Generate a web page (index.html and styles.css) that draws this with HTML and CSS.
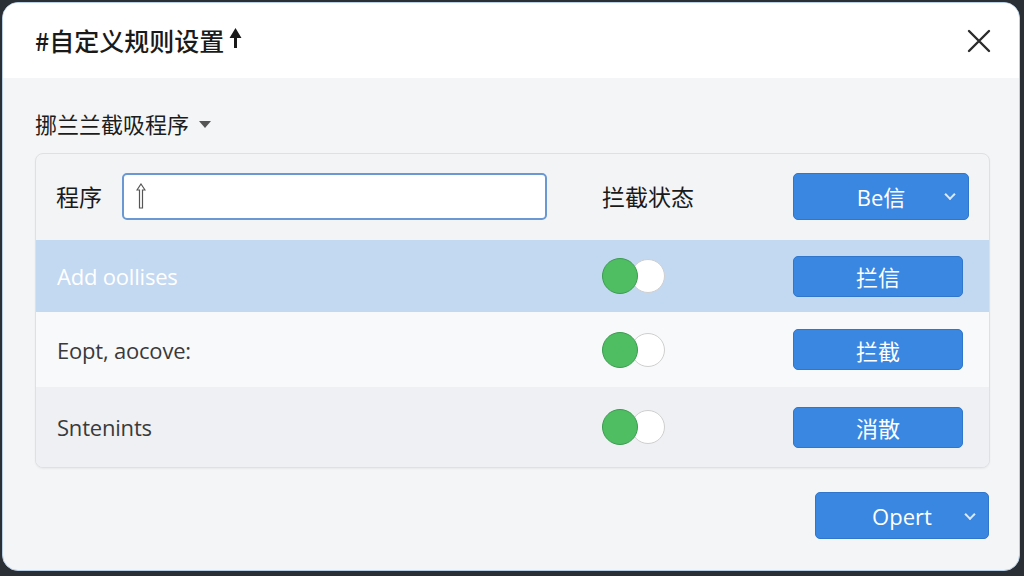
FILE: index.html
```html
<!DOCTYPE html>
<html lang="zh-CN">
<head>
    <meta charset="UTF-8">
    <meta name="viewport" content="width=device-width, initial-scale=1.0">
    <title>自定义规则设置</title>
    <link rel="stylesheet" href="styles.css">
</head>
<body>
    <div class="dialogo">
        <div class="cabecalho">
            <h1 class="titulo">#自定义规则设置
                <svg class="seta" width="13" height="22" viewBox="0 0 13 22">
                    <path d="M6.5 1 L12.5 11 L8 11 L8 21 L5 21 L5 11 L0.5 11 Z" fill="#1a1a1a"/>
                </svg>
            </h1>
            <button class="fechar" aria-label="关闭">
                <svg width="24" height="24" viewBox="0 0 24 24">
                    <path d="M2 2 L22 22 M22 2 L2 22" stroke="#2b2b2b" stroke-width="2.4" fill="none" stroke-linecap="round"/>
                </svg>
            </button>
        </div>

        <div class="corpo">
            <div class="secao">挪兰兰截吸程序 <span class="triangulo"></span></div>

            <div class="cartao">
                <div class="linha linha-topo">
                    <div class="celula-nome">
                        <span class="rotulo">程序</span>
                        <div class="campo">
                            <svg width="10" height="26" viewBox="0 0 10 26">
                                <path d="M5 1 L9 7 L6.5 7 L6.5 25 L3.5 25 L3.5 7 L1 7 Z" fill="none" stroke="#555" stroke-width="1.2"/>
                            </svg>
                        </div>
                    </div>
                    <div class="celula-estado rotulo">拦截状态</div>
                    <div class="celula-botao">
                        <button class="botao botao-menu">Be信 <span class="chevron"></span></button>
                    </div>
                </div>

                <div class="linha linha-ativa">
                    <div class="celula-nome nome claro">Add oollises</div>
                    <div class="celula-estado">
                        <span class="toggle"><span class="bola-on"></span><span class="bola-off"></span></span>
                    </div>
                    <div class="celula-botao"><button class="botao">拦信</button></div>
                </div>

                <div class="linha linha-clara">
                    <div class="celula-nome nome">Eopt, aocove:</div>
                    <div class="celula-estado">
                        <span class="toggle"><span class="bola-on"></span><span class="bola-off"></span></span>
                    </div>
                    <div class="celula-botao"><button class="botao">拦截</button></div>
                </div>

                <div class="linha linha-cinza">
                    <div class="celula-nome nome">Sntenints</div>
                    <div class="celula-estado">
                        <span class="toggle"><span class="bola-on"></span><span class="bola-off"></span></span>
                    </div>
                    <div class="celula-botao"><button class="botao">消散</button></div>
                </div>
            </div>

            <div class="rodape">
                <button class="botao botao-menu botao-rodape">Opert <span class="chevron"></span></button>
            </div>
        </div>
    </div>
</body>
</html>
```

FILE: styles.css
```css
body {
    margin: 0;
    background: #2a2f36;
    font-family: "Open Sans", "Noto Sans CJK SC", sans-serif;
    height: 576px;
    overflow: hidden;
}
.dialogo {
    margin: 2px 2px 0 2px;
    width: 1018px;
    height: 569px;
    border-radius: 16px;
    overflow: hidden;
    background: #f4f5f7;
    border: 1px solid #b9cfe6;
    box-sizing: border-box;
    display: flex;
    flex-direction: column;
}
.cabecalho {
    height: 75px;
    background: #ffffff;
    display: flex;
    align-items: center;
    justify-content: space-between;
    padding: 0 28px 0 32px;
    flex-shrink: 0;
}
.titulo {
    margin: 0;
    font-family: "Noto Sans CJK SC", sans-serif;
    font-size: 25px;
    font-weight: 500;
    color: #1a1a1a;
    display: flex;
    align-items: center;
    gap: 5px;
    padding-bottom: 2px;
}
.seta {
    margin-top: -4px;
}
.fechar {
    background: none;
    border: none;
    padding: 0;
    width: 24px;
    height: 24px;
    display: flex;
}
.corpo {
    padding: 32px 29px 0 32px;
    display: flex;
    flex-direction: column;
}
.secao {
    font-family: "Noto Sans CJK SC", sans-serif;
    font-size: 22px;
    color: #1c1c1c;
    height: 26px;
    display: flex;
    align-items: center;
    gap: 6px;
}
.triangulo {
    width: 0;
    height: 0;
    border-left: 6px solid transparent;
    border-right: 6px solid transparent;
    border-top: 7px solid #555;
    margin-left: 4px;
    margin-top: 2px;
}
.cartao {
    margin-top: 17px;
    border: 1px solid #dde0e4;
    border-radius: 8px;
    overflow: hidden;
    background: #f3f4f6;
    box-shadow: 0 1px 2px rgba(0, 0, 0, 0.05);
}
.linha {
    display: flex;
    align-items: center;
    padding-left: 20px;
}
.linha-topo {
    height: 86px;
    padding-bottom: 2px;
    box-sizing: border-box;
}
.linha-ativa {
    height: 72px;
    background: #c3d8f1;
}
.linha-clara {
    height: 75px;
    background: #f8f9fa;
}
.linha-cinza {
    height: 80px;
    background: #eef0f3;
}
.celula-nome {
    width: 546px;
    box-sizing: border-box;
    display: flex;
    align-items: center;
}
.celula-estado {
    width: 191px;
    display: flex;
    align-items: center;
}
.celula-botao {
    display: flex;
}
.rotulo {
    font-family: "Noto Sans CJK SC", sans-serif;
    font-size: 23px;
    color: #1a1a1a;
}
.campo {
    margin-left: 20px;
    width: 425px;
    height: 47px;
    box-sizing: border-box;
    border: 2px solid #6a98d2;
    border-radius: 5px;
    background: #ffffff;
    display: flex;
    align-items: center;
    padding-left: 12px;
}
.nome {
    font-size: 22px;
    font-weight: 500;
    color: #3a3a3a;
    padding-left: 1px;
    letter-spacing: -0.2px;
}
.claro {
    color: #ffffff;
}
.toggle {
    display: flex;
    align-items: center;
}
.bola-on {
    width: 34px;
    height: 34px;
    border-radius: 50%;
    background: #4fbe63;
    border: 1px solid #3b9c50;
    position: relative;
    z-index: 1;
}
.bola-off {
    width: 32px;
    height: 32px;
    border-radius: 50%;
    background: #ffffff;
    border: 1.5px solid #cfcfcf;
    margin-left: -7px;
}
.botao {
    width: 170px;
    height: 41px;
    border: 1px solid #2f76cc;
    border-radius: 5px;
    background: #3a87e2;
    color: #ffffff;
    font-family: "Noto Sans CJK SC", sans-serif;
    font-size: 22px;
    display: flex;
    align-items: center;
    justify-content: center;
    padding: 0;
}
.botao-menu {
    width: 176px;
    height: 47px;
    position: relative;
    font-family: "Open Sans", "Noto Sans CJK SC", sans-serif;
}
.chevron {
    position: absolute;
    right: 14px;
    top: 50%;
    width: 6px;
    height: 6px;
    border-right: 2px solid #dce9f8;
    border-bottom: 2px solid #dce9f8;
    transform: translateY(-70%) rotate(45deg);
}
.rodape {
    display: flex;
    justify-content: flex-end;
    margin-top: 24px;
    padding-right: 1px;
}
.botao-rodape {
    width: 174px;
    font-size: 22px;
}
```
